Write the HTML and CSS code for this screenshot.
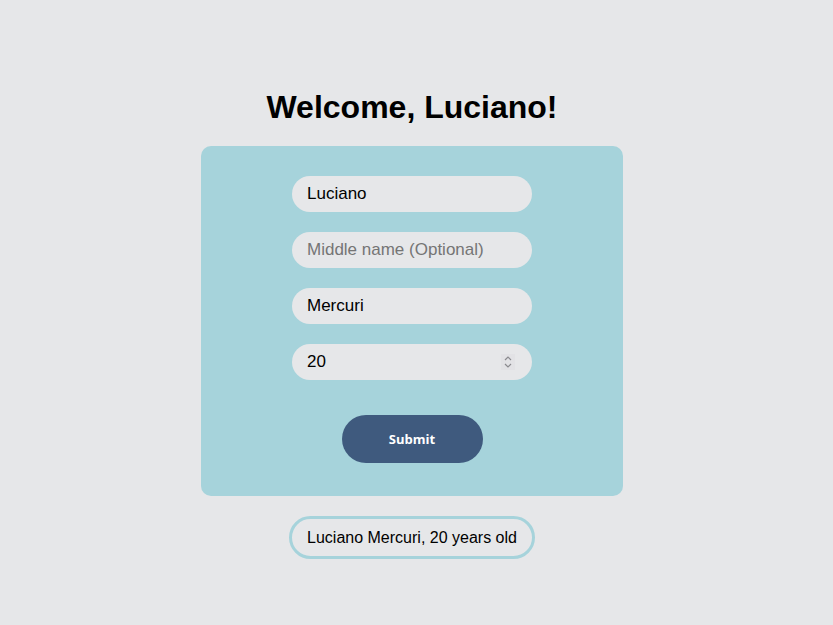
FILE: index.html
```html
<!DOCTYPE html>
<html lang="en">
<head>
<meta charset="utf-8">
<title>Welcome</title>
<link rel="stylesheet" href="styles.css">
</head>
<body>
<main class="page">
  <h1 class="title">Welcome, Luciano!</h1>
  <form class="card">
    <input class="field" type="text" value="Luciano" placeholder="First name">
    <input class="field" type="text" placeholder="Middle name (Optional)">
    <input class="field" type="text" value="Mercuri" placeholder="Last name">
    <div class="number-wrap">
      <input class="field number" type="number" value="20">
      <svg class="spinner" width="14" height="16" viewBox="0 0 14 16" aria-hidden="true">
        <rect x="0" y="0" width="14" height="16" fill="#e2e2e5"/>
        <path d="M4 6 L7 3 L10 6" fill="none" stroke="#8a8a8e" stroke-width="1.2"/>
        <path d="M4 10 L7 13 L10 10" fill="none" stroke="#8a8a8e" stroke-width="1.2"/>
      </svg>
    </div>
    <button class="submit" type="button">Submit</button>
  </form>
  <div class="result">Luciano Mercuri, 20 years old</div>
</main>
</body>
</html>
```

FILE: styles.css
```css
* { box-sizing: border-box; }
html, body { margin: 0; padding: 0; }
body {
  background: #e6e7e9;
  font-family: "Liberation Sans", Arial, sans-serif;
  color: #000;
}
.page {
  display: flex;
  flex-direction: column;
  align-items: center;
  padding-top: 89px;
  padding-right: 9px;
}
.title {
  margin: 0 0 20px;
  font-size: 32px;
  font-weight: bold;
  line-height: 37px;
}
.card {
  width: 422px;
  background: #a6d3db;
  border-radius: 10px;
  padding: 30px 0 33px;
  display: flex;
  flex-direction: column;
  align-items: center;
}
.field {
  width: 240px;
  height: 36px;
  border: none;
  border-radius: 18px;
  background: #e6e7e9;
  padding: 0 15px;
  margin: 0 0 20px;
  font-family: "Liberation Sans", Arial, sans-serif;
  font-size: 17px;
  color: #000;
  outline: none;
}
.field::placeholder { color: #757575; }
.number-wrap {
  position: relative;
  width: 240px;
  height: 36px;
  margin-bottom: 20px;
}
.number { margin: 0; -moz-appearance: textfield; }
.number::-webkit-inner-spin-button,
.number::-webkit-outer-spin-button { -webkit-appearance: none; margin: 0; }
.spinner {
  position: absolute;
  right: 17px;
  top: 10px;
}
.submit {
  margin-top: 15px;
  width: 141px;
  height: 48px;
  border: none;
  border-radius: 24px;
  background: #3f5a7e;
  color: #fff;
  font-family: "Open Sans", "Liberation Sans", Arial, sans-serif;
  font-size: 13px;
  font-weight: bold;
}
.result {
  margin-top: 20px;
  border: 3px solid #a6d3db;
  border-radius: 22px;
  padding: 9px 15px;
  font-size: 16px;
  line-height: 19px;
}
```
